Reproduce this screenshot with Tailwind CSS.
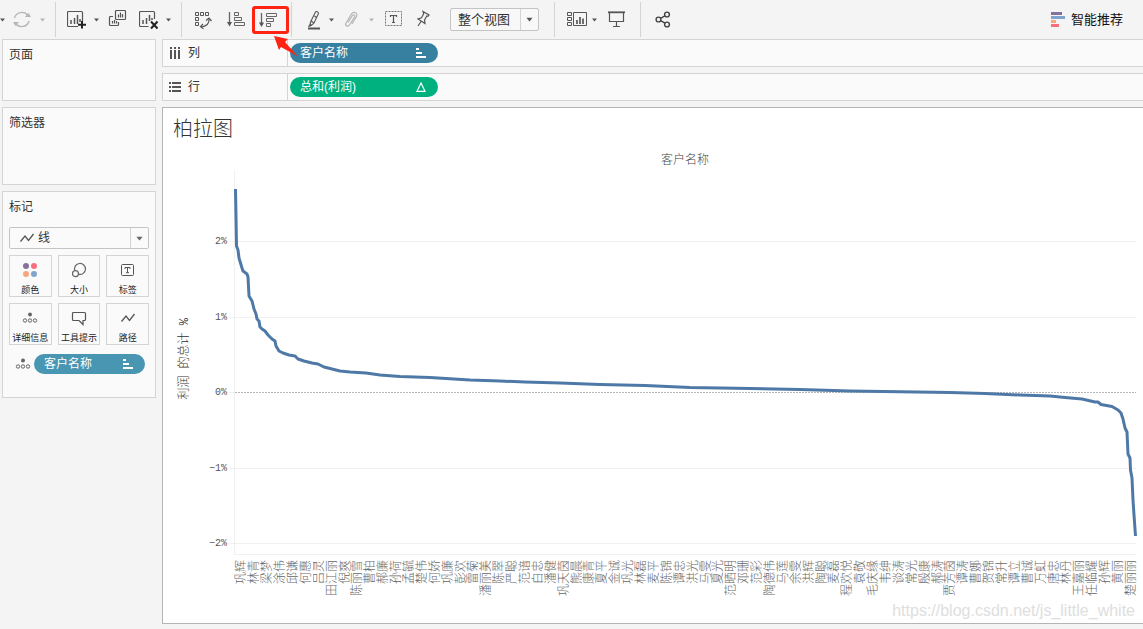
<!DOCTYPE html>
<html lang="zh-CN">
<head>
<meta charset="utf-8">
<meta name="viewport" content="width=device-width, initial-scale=1">
<title>柏拉图</title>
<script src="https://cdn.jsdelivr.net/npm/@tailwindcss/browser@4"></script>
</head>
<body class="min-h-screen overflow-x-hidden bg-[#f4f4f4] font-['Liberation_Sans','Noto_Sans_CJK_SC',sans-serif] text-xs text-[#333333]">
<svg class="hidden" aria-hidden="true">
  <symbol id="caret" viewBox="0 0 5 4"><path d="M0 0.5h5L2.5 3.5z" fill="currentColor"/></symbol>
  <symbol id="details" viewBox="0 0 16 12"><circle cx="8" cy="2.5" r="2" fill="#666"/><g fill="none" stroke="#666"><circle cx="3" cy="8.5" r="1.7"/><circle cx="8" cy="8.5" r="1.7"/><circle cx="13" cy="8.5" r="1.7"/></g></symbol>
  <symbol id="line" viewBox="0 0 16 12"><path d="M1.5 9.5L6 4l3.500 4.500L14.500 2" fill="none" stroke="#555" stroke-width="1.300"/></symbol>
  <symbol id="sort" viewBox="0 0 10 10"><path d="M0 0h3v2H0zM0 4h6v2H0zM0 8h10v2H0z" fill="#fff"/></symbol>
</svg>

<header class="flex h-[39px] items-center text-[#555555]">
  <div class="flex h-[35px] items-center border-r border-[#d4d4d4] pr-[10px]">
    <button aria-label="菜单" class="mr-[7px]"><svg class="h-1 w-[5px]"><use href="#caret"/></svg></button>
    <button aria-label="刷新" class="mr-2"><svg class="size-5" viewBox="0 0 20 20" fill="none" stroke="#b5b5b5" stroke-width="1.300"><path d="M2.500 8A7.500 7 0 0 1 16 5.500M17 11A7.500 7 0 0 1 3.500 13.500"/><path d="M13 7h6L16.500 3zM7 12H1l2.500 4z" fill="#b5b5b5" stroke="none"/></svg></button>
    <button aria-label="刷新选项" class="text-[#b5b5b5]"><svg class="h-1 w-[5px]"><use href="#caret"/></svg></button>
  </div>
  <div class="flex h-[35px] items-center border-r border-[#d4d4d4] pr-[10px] pl-[11px]">
    <button aria-label="新建工作表" class="mr-[7px]"><svg class="size-5" viewBox="0 0 20 20" fill="none" stroke="#555"><path d="M11 16.500H1.500a1 1 0 0 1-1-1v-13a1 1 0 0 1 1-1h13a1 1 0 0 1 1 1V11" stroke-width="1.200"/><path d="M4 10v4M7.500 8v6M10.500 5v9M13 9v3" stroke-width="1.500"/><path d="M15 11v7.500M11 14.700h8" stroke="#222" stroke-width="2"/></svg></button>
    <button aria-label="新建选项" class="mr-[9px]"><svg class="h-1 w-[5px]"><use href="#caret"/></svg></button>
    <button aria-label="复制" class="mr-[11px]"><svg class="size-5" viewBox="0 0 20 20" fill="none" stroke="#555" stroke-width="1.200"><rect x="7.500" y=".5" width="10" height="9" rx="1"/><path d="M5 6.500H2.500a1 1 0 0 0-1 1v7a1 1 0 0 0 1 1h7a1 1 0 0 0 1-1V12M10.500 4.500v3M12.500 2.500v5M14.500 4v3.500M4.500 11v2.500M6.500 10v3.500M8.500 11v2.500"/></svg></button>
    <button aria-label="清除工作表" class="mr-[7px]"><svg class="size-5" viewBox="0 0 20 20" fill="none" stroke="#555"><path d="M9.500 16.500h-8a1 1 0 0 1-1-1v-13a1 1 0 0 1 1-1h13a1 1 0 0 1 1 1V9" stroke-width="1.200"/><path d="M4 10v4M7.500 8v6M10.500 5v6M13 8v2" stroke-width="1.500"/><path d="M12 11.500l6.500 7M18.500 11.500l-6.500 7" stroke="#222" stroke-width="2"/></svg></button>
    <button aria-label="清除选项"><svg class="h-1 w-[5px]"><use href="#caret"/></svg></button>
  </div>
  <div class="flex h-[35px] items-center border-r border-[#d4d4d4] pr-[2px] pl-[11px]">
    <button aria-label="交换行和列" class="mr-[13px]"><svg class="size-5" viewBox="0 0 20 20" fill="none" stroke="#555"><path d="M2.500 2.500h3v3h-3zM7.500 2.500h3v3h-3zM12.500 2.500h3v3h-3zM2.500 7.500h3v3h-3zM2.500 12.500h3v3h-3z"/><path d="M16 9c.5 4.500-2.500 7.500-8 8" stroke-width="1.200"/><path d="M13 10.500l3-2.500 2.500 3M10 14l-2.500 2.700 3 2" stroke-width="1.200"/></svg></button>
    <button aria-label="升序排序" class="mr-[6px]"><svg class="size-5" viewBox="0 0 20 20" fill="none" stroke="#666"><path d="M3.500 2v11" stroke-width="1.300"/><path d="M1 12h5L3.500 16.500z" fill="#555" stroke="none"/><path d="M8.500 2.500h4v3h-4zM8.500 7.500h7v3h-7zM8.500 12.500h10v3h-10z"/></svg></button>
    <button aria-label="降序排序" class="flex h-7 w-[37px] items-center rounded-[3px] border-3 border-[#ff2314] pl-[3px]"><svg class="size-5" viewBox="0 0 20 20" fill="none" stroke="#666"><path d="M3.500 3v11" stroke-width="1.300"/><path d="M1 12.500h5L3.500 17z" fill="#555" stroke="none"/><path d="M8.500 3.500h10v3h-10zM8.500 8.500h7v3h-7zM8.500 13.500h4v3h-4z"/></svg></button>
  </div>
  <div class="flex h-[35px] items-center border-r border-[#d4d4d4] pr-[15px] pl-3">
    <button aria-label="突出显示" class="mr-[5px]"><svg class="size-5" viewBox="0 0 20 20" fill="none" stroke="#555"><path d="M7 11l4.500-9c1-1 3-.2 3 1.500L10 13zM7 11l3 2M7 11l-1 3.500 1.500.7L10 13M10.500 6l2.500 2" stroke-width="1.100"/><path d="M4.500 16.500l1.500-2 1.500 1z" fill="#555"/><path d="M4 18.500h12" stroke-width="2"/></svg></button>
    <button aria-label="突出显示选项" class="mr-[7px]"><svg class="h-1 w-[5px]"><use href="#caret"/></svg></button>
    <button aria-label="成员分组" class="mr-2"><svg class="size-5" viewBox="0 0 20 20" fill="none" stroke="#b5b5b5" stroke-width="1.200"><path d="M7 12.500l4.500-7c1-1.500 3-.3 2.200 1.200L8.500 15c-1.500 2.300-4.800.7-3.500-2L10.500 4c2-3.300 7-1 5 2.500L11 14"/></svg></button>
    <button aria-label="分组选项" class="mr-[10px] text-[#b5b5b5]"><svg class="h-1 w-[5px]"><use href="#caret"/></svg></button>
    <button aria-label="显示标记标签" class="mr-[9px]"><svg class="size-5" viewBox="0 0 20 20" fill="none" stroke="#777"><rect x="1.500" y="1.500" width="16" height="14" stroke-dasharray="2 1"/><path d="M6.500 7V5.500h6V7M9.500 5.500v7M8 12.500h3" stroke="#555" stroke-width="1.200"/></svg></button>
    <button aria-label="固定" class="mr-[17px]"><svg class="size-5" viewBox="0 0 20 20" fill="none" stroke="#555" stroke-width="1.200"><path d="M10 1.500l6 3.500-1 1.300-1.200-.3-2.300 4 .5 3.500-7-4.500 3.500-1.200 2.200-4zM8 11.500L5 16"/></svg></button>
    <div class="relative flex">
      <select aria-label="视图大小" class="h-[23px] w-[89px] appearance-none rounded-[2px] border border-[#c4c4c4] bg-[#f8f8f8] pl-[7px] text-[13px] leading-5 text-[#333333]"><option>整个视图</option><option>标准</option></select>
      <span class="pointer-events-none absolute inset-y-px right-px flex w-[18px] items-center justify-center border-l border-[#d4d4d4]"><svg class="h-[5px] w-[7px]" viewBox="0 0 5 4"><use href="#caret" width="5" height="4"/></svg></span>
    </div>
  </div>
  <div class="flex h-[35px] items-center border-r border-[#d4d4d4] pr-[13px] pl-3">
    <button aria-label="显示卡" class="mr-[5px]"><svg class="size-5" viewBox="0 0 20 20" fill="none" stroke="#555"><path d="M.5 2.500h4v3h-4zM.5 7.500h4v3h-4zM.5 12.500h4v3h-4zM6.500 2.500h13v13h-13z"/><path d="M10 10v4M13 7v7M16 8.500V14" stroke-width="1.700"/></svg></button>
    <button aria-label="卡选项" class="mr-[10px]"><svg class="h-1 w-[5px]"><use href="#caret"/></svg></button>
    <button aria-label="演示模式"><svg class="size-5" viewBox="0 0 20 20" fill="none" stroke="#555" stroke-width="1.200"><path d="M2.500 2.500v9h14v-9M9.500 11.500v4.500M6 16.500h7"/><path d="M1 2.300h17" stroke-width="1.800"/></svg></button>
  </div>
  <button aria-label="共享" class="ml-3"><svg class="size-5" viewBox="0 0 20 20" fill="none" stroke="#444" stroke-width="1.400"><circle cx="5.500" cy="9.500" r="2.400"/><circle cx="14" cy="4.500" r="2.400"/><circle cx="14" cy="14.500" r="2.400"/><path d="M7.600 8.300l4.300-2.500M7.600 10.700l4.300 2.500"/></svg></button>
  <button class="mr-5 ml-auto flex items-center gap-[6px] text-[13px] leading-5 text-[#111111]"><svg class="h-[15px] w-[14px]" viewBox="0 0 14 15"><path fill="#86719a" d="M0 0h11v3H0z"/><path fill="#80a4cf" d="M0 4h14v3H0z"/><path fill="#f6a77d" d="M0 8h5v3H0z"/><path fill="#fb6e80" d="M0 12h8v3H0z"/></svg>智能推荐</button>
</header>

<div class="flex gap-[6px] pl-[2px]">
  <aside class="flex w-[154px] shrink-0 flex-col gap-[6px]">
    <section class="h-[62px] border border-[#d4d4d4] bg-[#fafafa] px-[6px] pt-[5px]"><h2 class="leading-5">页面</h2></section>
    <section class="h-[78px] border border-[#d4d4d4] bg-[#fafafa] px-[6px] pt-[5px]"><h2 class="leading-5">筛选器</h2></section>
    <section class="h-[207px] border border-[#d4d4d4] bg-[#fafafa] px-[6px] pt-[5px]">
      <h2 class="leading-5">标记</h2>
      <div class="relative mt-[10px] flex">
        <select aria-label="标记类型" class="h-[22px] w-full appearance-none rounded-[2px] border border-[#c4c4c4] bg-[#fafafa] pl-[28px] text-xs leading-5"><option>线</option><option>条形图</option></select>
        <svg class="pointer-events-none absolute top-[5px] left-[10px] h-3 w-4"><use href="#line"/></svg>
        <span class="pointer-events-none absolute inset-y-px right-px flex w-[18px] items-center justify-center border-l border-[#d4d4d4] text-[#666666]"><svg class="h-[5px] w-[7px]" viewBox="0 0 5 4"><use href="#caret" width="5" height="4"/></svg></span>
      </div>
      <div class="mt-[6px] grid grid-cols-3 gap-[6px] text-[9px] leading-3 text-[#222222]">
        <button class="flex h-[42px] flex-col items-center justify-end gap-[6px] border border-[#d4d4d4]"><svg class="size-4" viewBox="0 0 16 16"><circle cx="4" cy="4" r="3" fill="#86719a"/><circle cx="12" cy="4" r="3" fill="#fb6e80"/><circle cx="4" cy="12" r="3" fill="#f6a77d"/><circle cx="12" cy="12" r="3" fill="#80a4cf"/></svg>颜色</button>
        <button class="flex h-[42px] flex-col items-center justify-end gap-[6px] border border-[#d4d4d4]"><svg class="size-4" viewBox="0 0 16 16" fill="none" stroke="#666" stroke-width="1.200"><path d="M3.700 8.500A5.500 5.500 0 1 1 7.700 12.300"/><circle cx="4.500" cy="11.700" r="3"/></svg>大小</button>
        <button class="flex h-[42px] flex-col items-center justify-end gap-[6px] border border-[#d4d4d4]"><svg class="size-4" viewBox="0 0 16 16" fill="none" stroke="#555"><rect x="1.500" y="2.500" width="12" height="11" rx="1"/><path d="M5 7V5.500h5V7M7.500 5.500v5M6 10.700h3"/></svg>标签</button>
        <button class="flex h-[42px] flex-col items-center justify-end gap-[8px] border border-[#d4d4d4]"><svg class="h-3 w-4"><use href="#details"/></svg><span class="whitespace-nowrap">详细信息</span></button>
        <button class="flex h-[42px] flex-col items-center justify-end gap-[6px] border border-[#d4d4d4]"><svg class="size-4" viewBox="0 0 16 16" fill="none" stroke="#555" stroke-width="1.200"><path d="M2.500 2.500h11a1 1 0 0 1 1 1v6a1 1 0 0 1-1 1H12v4l-4-4H2.500a1 1 0 0 1-1-1v-6a1 1 0 0 1 1-1z"/></svg><span class="whitespace-nowrap">工具提示</span></button>
        <button class="flex h-[42px] flex-col items-center justify-end gap-[8px] border border-[#d4d4d4]"><svg class="h-3 w-4"><use href="#line"/></svg>路径</button>
      </div>
      <div class="mt-[9px] flex items-center gap-[3px] pl-[6px]">
        <svg class="h-3 w-4"><use href="#details"/></svg>
        <button class="flex h-5 w-[111px] items-center justify-between rounded-full bg-[#4996b2] pr-3 pl-[10px] leading-5 text-white">客户名称<svg class="size-[10px]"><use href="#sort"/></svg></button>
      </div>
    </section>
  </aside>

  <main class="flex min-w-0 flex-1 flex-col gap-[6px]">
    <section class="flex h-7 border border-r-0 border-[#d4d4d4] bg-[#fafafa]">
      <h2 class="flex w-[125px] items-center gap-[7px] border-r border-[#d4d4d4] pl-[6px] leading-5"><svg class="size-3" viewBox="0 0 12 12"><path fill="#555" d="M1 0h2v2H1zM5 0h2v2H5zM9 0h2v2H9zM1 3h2v9H1zM5 3h2v9H5zM9 3h2v9H9z"/></svg>列</h2>
      <div class="flex items-center pl-[2px]"><button class="flex h-5 w-[148px] items-center justify-between rounded-full bg-[#37809f] pr-3 pl-[10px] leading-5 text-white">客户名称<svg class="size-[10px]"><use href="#sort"/></svg></button></div>
    </section>
    <section class="flex h-7 border border-r-0 border-[#d4d4d4] bg-[#fafafa]">
      <h2 class="flex w-[125px] items-center gap-[7px] border-r border-[#d4d4d4] pl-[6px] leading-5"><svg class="size-3" viewBox="0 0 12 12"><path fill="#555" d="M0 1h2v2H0zM0 5h2v2H0zM0 9h2v2H0zM3 1h9v2H3zM3 5h9v2H3zM3 9h9v2H3z"/></svg>行</h2>
      <div class="flex items-center pl-[2px]"><button class="flex h-5 w-[148px] items-center justify-between rounded-full bg-[#00b180] pr-3 pl-[10px] leading-5 text-white"><span>总和(利润)</span><svg class="size-[10px]" viewBox="0 0 10 10"><path d="M5 1L9 9.300H1z" fill="none" stroke="#fff" stroke-width="1.200"/></svg></button></div>
    </section>
    <section class="relative min-h-[517px] border border-r-0 border-[#b4b4b4] bg-white pr-[7px] font-['Liberation_Mono','Noto_Sans_CJK_SC',monospace] font-light">
      <h1 class="pt-2 pl-[10px] text-xl leading-[30px] text-[#333333]">柏拉图</h1>
      <p class="mt-[5px] pl-[71px] text-center leading-5 text-[#444444]">客户名称</p>
      <div class="-mt-px flex">
        <div class="flex w-[44px] items-end justify-end pr-[14px] pb-[155px] text-[#333333]"><span class="rotate-180 text-xs leading-4 whitespace-nowrap [text-orientation:sideways] [writing-mode:vertical-rl]">利润 的总计 %</span></div>
        <div class="flex h-[385px] w-[27px] flex-col justify-between pt-16 pr-[7px] pb-1 text-[10px] leading-[15px] text-[#555555]">
          <span class="self-end">2%</span><span class="self-end">1%</span><span class="self-end">0%</span><span class="self-end">−1%</span><span class="self-end">−2%</span>
        </div>
        <svg class="h-[385px] min-w-0 flex-1 overflow-visible" viewBox="234 170 902 385" preserveAspectRatio="none" fill="none" role="img" aria-label="利润的总计百分比">
          <path d="M229 241.500h907M229 317.500h907M229 468.500h907M229 543.500h907M234.500 170v385M234 554.500h902" stroke="#f0f0f0"/>
          <path d="M229 392.500h5" stroke="#f0f0f0"/>
          <path d="M235 392.500h901" stroke="#b8b8b8" stroke-dasharray="2 1"/>
          <polyline vector-effect="non-scaling-stroke" stroke="#4e79a7" stroke-width="3" stroke-linejoin="round" points="235.500,189 236.500,246 238,250 239,258 242,268 243,271 247,274 248,277 249,296 252,301 254,309 256,314 257,319 259,321 260,327 262,329 265,331 268,335 272,339 275,341 276,346 279,351 283,353 289,355 295,356 298,359 304,361 312,363 318,364 324,367 332,369 340,371 350,372 366,373 380,375 400,376.500 430,377.500 470,380 500,381 525,382 560,383 600,384.500 645,385.500 690,387.500 750,388.500 800,389.500 850,391 900,391.700 950,392.500 985,393.500 1020,395 1050,396 1065,397.500 1082,399 1095,402 1098,402 1101,404.500 1112,406.500 1118,410 1121,413 1123,419 1125,428 1127,432 1128,454 1130,458 1130.500,470 1132,478 1133,500 1134,515 1135.500,536"/>
        </svg>
      </div>
      <ol id="names" class="-mr-[2px] ml-[73px] flex items-start pt-[5px] text-xs leading-3 text-[#666666]"></ol>
      <p class="absolute right-2 bottom-1 font-['Liberation_Sans',sans-serif] text-base leading-4 font-normal text-[#dedede]">https://blog.csdn.net/js_little_white</p>
    </section>
  </main>
</div>

<svg class="pointer-events-none absolute top-[34px] left-[272px] h-6 w-7" viewBox="272 34 28 24"><path d="M274 36l14 3-3 3 13 14.500-17-9.500-2 3z" fill="#ff2314"/></svg>

<script>
  const names = '巩辉 林青 梁梦 涂伟 邱谦 何惠 吕灵 田江丽 倪爽 陈丽雪 曹柏 郝廉 孙荷 孟毓 楚伟 何娇 巩廉 彭欢 雷菊 潘丽美 陈翠 严聪 范谙 白忠 潘健 巩天茵 熊晨 康青 夏平 金诚 巩光 林磊 麦平 陈锦 谭忠 洪光 马雯 夏光 范晒明 邓珊 范彩 陶德伟 马莲 余雯 洪辉 陶聪 麦磊 程欢悦 袁敬 毛庆缘 韦绅 谈涛 常光 殷康 郝涛 贾芳茵 谭涛 曹娜 贺锦 常升 谭立 曹诚 万虹 唐忠 林丹 王嘉丽 任临耀 孙辉 黄丽 楚丽丽'.split(' ');
  document.getElementById('names').innerHTML = names.map(n => `<li class="flex min-w-0 flex-1 justify-center"><span class="rotate-180 whitespace-nowrap [text-orientation:sideways] [writing-mode:vertical-rl]">${n}</span></li>`).join('');
</script>
</body>
</html>
